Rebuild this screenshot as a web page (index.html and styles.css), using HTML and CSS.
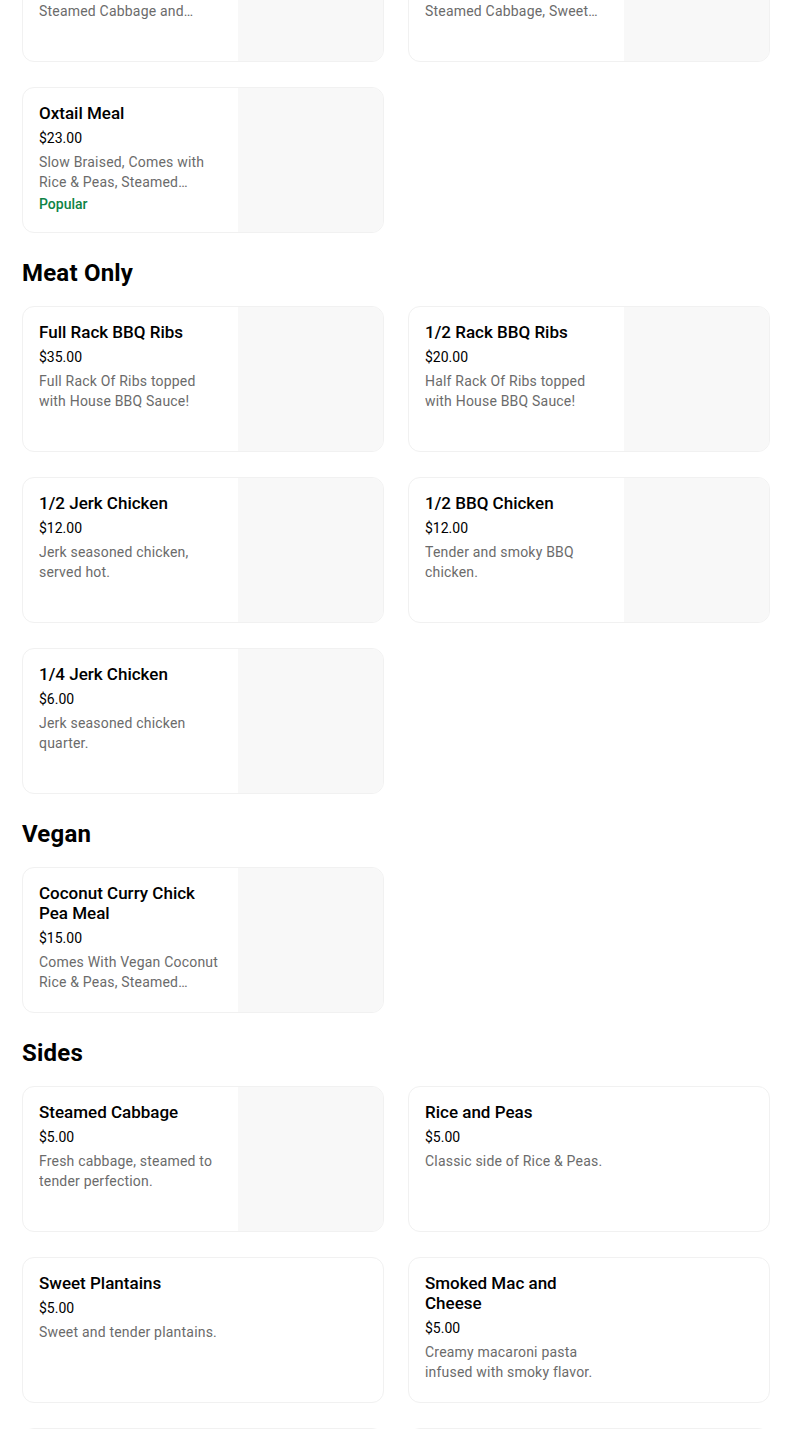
FILE: index.html
```html
<!DOCTYPE html>
<html lang="en">
<head>
<meta charset="utf-8">
<title>Menu</title>
<link rel="stylesheet" href="styles.css">
</head>
<body>
<main class="menu">
  <section class="section first">
    <div class="grid">
      <article class="card">
        <div class="info">
          <h3 class="title">Curry Chicken Meal</h3>
          <div class="price">$18.00</div>
          <p class="desc">Comes with Rice &amp; Peas, Steamed Cabbage and…</p>
        </div>
        <div class="thumb"></div>
      </article>
      <article class="card">
        <div class="info">
          <h3 class="title">Jerk Chicken Meal</h3>
          <div class="price">$18.00</div>
          <p class="desc">Comes with Rice &amp; Peas, Steamed Cabbage, Sweet…</p>
        </div>
        <div class="thumb"></div>
      </article>
      <article class="card">
        <div class="info">
          <h3 class="title">Oxtail Meal</h3>
          <div class="price">$23.00</div>
          <p class="desc">Slow Braised, Comes with Rice &amp; Peas, Steamed…</p>
          <div class="tag">Popular</div>
        </div>
        <div class="thumb"></div>
      </article>
    </div>
  </section>

  <section class="section">
    <h2 class="heading">Meat Only</h2>
    <div class="grid">
      <article class="card">
        <div class="info">
          <h3 class="title">Full Rack BBQ Ribs</h3>
          <div class="price">$35.00</div>
          <p class="desc">Full Rack Of Ribs topped with House BBQ Sauce!</p>
        </div>
        <div class="thumb"></div>
      </article>
      <article class="card">
        <div class="info">
          <h3 class="title">1/2 Rack BBQ Ribs</h3>
          <div class="price">$20.00</div>
          <p class="desc">Half Rack Of Ribs topped with House BBQ Sauce!</p>
        </div>
        <div class="thumb"></div>
      </article>
      <article class="card">
        <div class="info">
          <h3 class="title">1/2 Jerk Chicken</h3>
          <div class="price">$12.00</div>
          <p class="desc">Jerk seasoned chicken, served hot.</p>
        </div>
        <div class="thumb"></div>
      </article>
      <article class="card">
        <div class="info">
          <h3 class="title">1/2 BBQ Chicken</h3>
          <div class="price">$12.00</div>
          <p class="desc">Tender and smoky BBQ chicken.</p>
        </div>
        <div class="thumb"></div>
      </article>
      <article class="card">
        <div class="info">
          <h3 class="title">1/4 Jerk Chicken</h3>
          <div class="price">$6.00</div>
          <p class="desc">Jerk seasoned chicken quarter.</p>
        </div>
        <div class="thumb"></div>
      </article>
    </div>
  </section>

  <section class="section">
    <h2 class="heading">Vegan</h2>
    <div class="grid">
      <article class="card">
        <div class="info">
          <h3 class="title">Coconut Curry Chick Pea Meal</h3>
          <div class="price">$15.00</div>
          <p class="desc">Comes With Vegan Coconut Rice &amp; Peas, Steamed…</p>
        </div>
        <div class="thumb"></div>
      </article>
    </div>
  </section>

  <section class="section">
    <h2 class="heading">Sides</h2>
    <div class="grid">
      <article class="card">
        <div class="info">
          <h3 class="title">Steamed Cabbage</h3>
          <div class="price">$5.00</div>
          <p class="desc">Fresh cabbage, steamed to tender perfection.</p>
        </div>
        <div class="thumb"></div>
      </article>
      <article class="card">
        <div class="info">
          <h3 class="title">Rice and Peas</h3>
          <div class="price">$5.00</div>
          <p class="desc">Classic side of Rice &amp; Peas.</p>
        </div>
        <div class="thumb empty"></div>
      </article>
      <article class="card">
        <div class="info">
          <h3 class="title">Sweet Plantains</h3>
          <div class="price">$5.00</div>
          <p class="desc">Sweet and tender plantains.</p>
        </div>
        <div class="thumb empty"></div>
      </article>
      <article class="card">
        <div class="info">
          <h3 class="title">Smoked Mac and Cheese</h3>
          <div class="price">$5.00</div>
          <p class="desc">Creamy macaroni pasta infused with smoky flavor.</p>
        </div>
        <div class="thumb empty"></div>
      </article>
      <article class="card">
        <div class="info">
          <h3 class="title">Festival</h3>
          <div class="price">$5.00</div>
          <p class="desc">Sweet fried dumplings.</p>
        </div>
        <div class="thumb empty"></div>
      </article>
      <article class="card">
        <div class="info">
          <h3 class="title">Fried Dumplings</h3>
          <div class="price">$5.00</div>
          <p class="desc">Golden fried dumplings.</p>
        </div>
        <div class="thumb empty"></div>
      </article>
    </div>
  </section>
</main>
</body>
</html>
```

FILE: styles.css
```css
* { box-sizing: border-box; }

html, body {
  margin: 0;
  padding: 0;
  background: #ffffff;
}

body {
  font-family: Roboto, "Liberation Sans", Arial, sans-serif;
  color: #000000;
  overflow: hidden;
}

.menu {
  width: 748px;
  margin: -84px 0 0 22px;
}

.section { margin-top: 24px; }
.section.first { margin-top: 0; }

.heading {
  margin: 0 0 17px 0;
  font-size: 24px;
  line-height: 32px;
  font-weight: 700;
  letter-spacing: 0.2px;
  color: #000000;
}

.grid {
  display: grid;
  grid-template-columns: 362px 362px;
  column-gap: 24px;
  row-gap: 25px;
}

.card {
  display: flex;
  height: 146px;
  border: 1px solid #f1f1f1;
  border-radius: 12px;
  overflow: hidden;
  background: #ffffff;
}

.info {
  width: 215px;
  flex: none;
  padding: 15px 16px 0 16px;
}

.title {
  margin: 0 0 5px 0;
  font-size: 17px;
  line-height: 20px;
  font-weight: 500;
  color: #000000;
}

.price {
  font-size: 14px;
  line-height: 20px;
  color: #000000;
  margin-bottom: 4px;
}

.desc {
  margin: 0;
  font-size: 14px;
  line-height: 20px;
  letter-spacing: 0.2px;
  color: #6b6b6b;
  display: -webkit-box;
  -webkit-line-clamp: 2;
  -webkit-box-orient: vertical;
  overflow: hidden;
}

.tag {
  margin-top: 2px;
  font-size: 14px;
  line-height: 20px;
  font-weight: 500;
  color: #0e8345;
}

.thumb {
  flex: 1;
  background: #f8f8f8;
}

.thumb.empty { background: transparent; }
```
